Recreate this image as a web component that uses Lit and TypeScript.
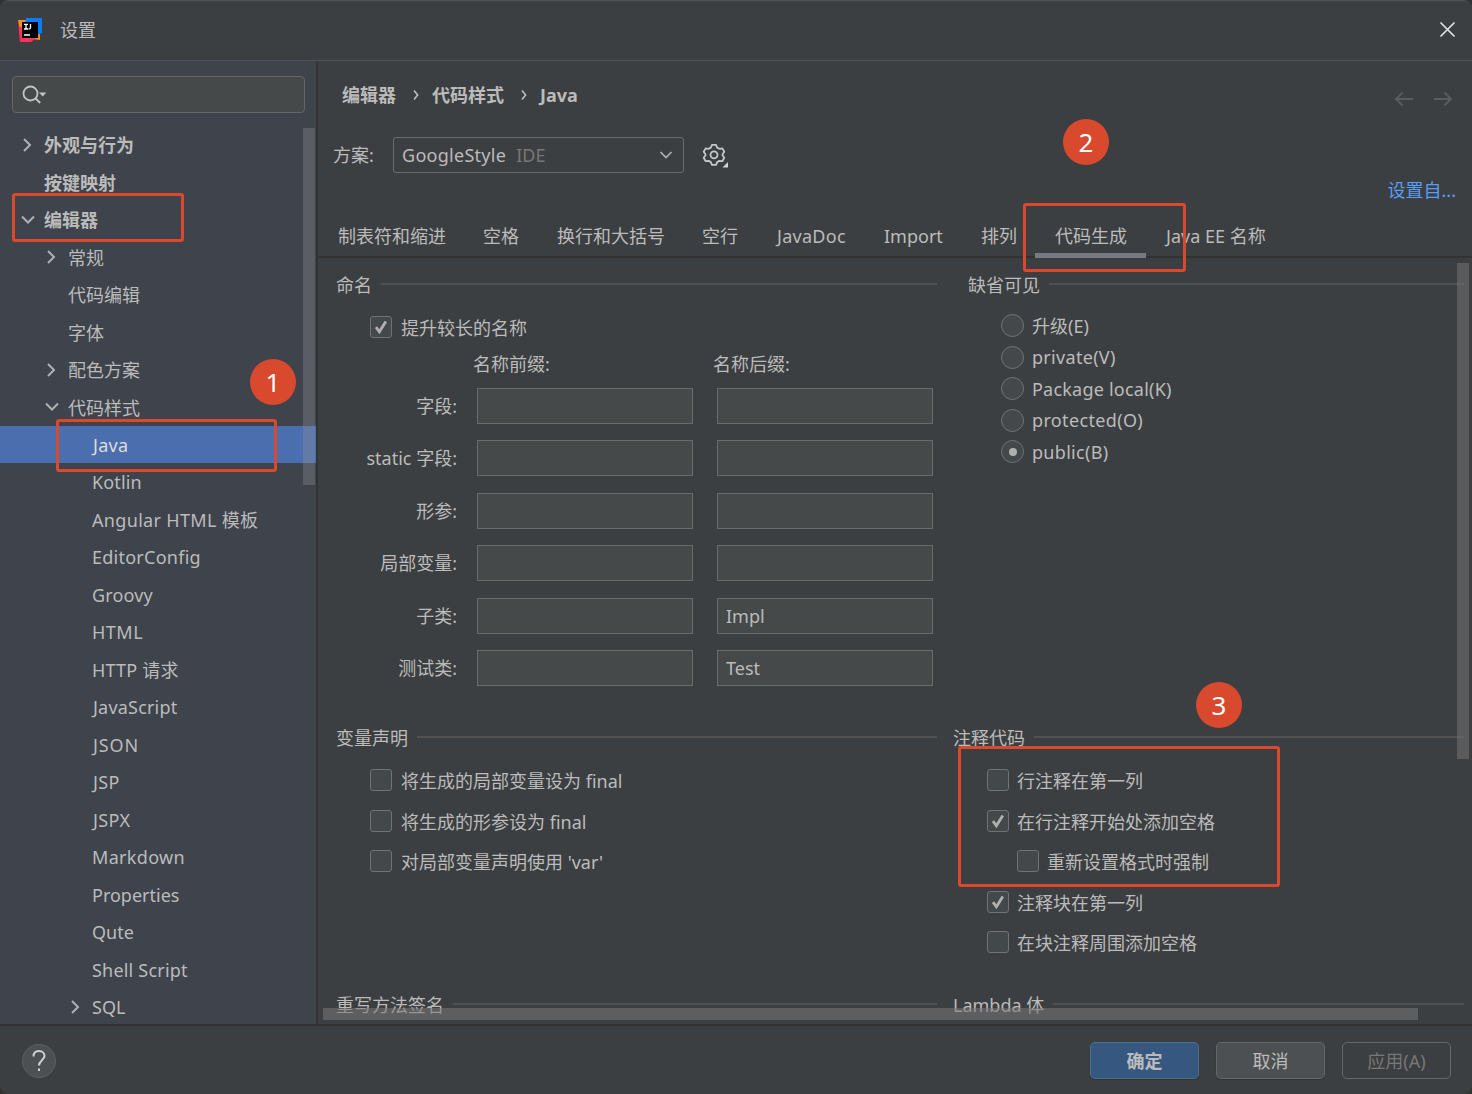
import { LitElement, html, css, svg, nothing } from "lit";
import { customElement, state } from "lit/decorators.js";
import { classMap } from "lit/directives/class-map.js";
import { styleMap } from "lit/directives/style-map.js";

type Node = { label: string; level: number; arrow?: "open" | "closed"; bold?: boolean };

const TREE: Node[] = [
  { label: "外观与行为", level: 0, arrow: "closed", bold: true },
  { label: "按键映射", level: 0, bold: true },
  { label: "编辑器", level: 0, arrow: "open", bold: true },
  { label: "常规", level: 1, arrow: "closed" },
  { label: "代码编辑", level: 1 },
  { label: "字体", level: 1 },
  { label: "配色方案", level: 1, arrow: "closed" },
  { label: "代码样式", level: 1, arrow: "open" },
  { label: "Java", level: 2 },
  { label: "Kotlin", level: 2 },
  { label: "Angular HTML 模板", level: 2 },
  { label: "EditorConfig", level: 2 },
  { label: "Groovy", level: 2 },
  { label: "HTML", level: 2 },
  { label: "HTTP 请求", level: 2 },
  { label: "JavaScript", level: 2 },
  { label: "JSON", level: 2 },
  { label: "JSP", level: 2 },
  { label: "JSPX", level: 2 },
  { label: "Markdown", level: 2 },
  { label: "Properties", level: 2 },
  { label: "Qute", level: 2 },
  { label: "Shell Script", level: 2 },
  { label: "SQL", level: 2, arrow: "closed" },
];

// Tracking per label, in pixels
const TRACKING: Record<string, number> = {
  "Angular HTML 模板": 0.33,
  EditorConfig: 0.25,
  Kotlin: 0.15,
  Groovy: 0.15,
  HTML: 0.5,
  "HTTP 请求": 0.2,
  Java: 0.25,
  JavaScript: 0.2,
  JSON: 0.9,
  JSP: 0.3,
  JSPX: 0.4,
  Markdown: 0.33,
  "Shell Script": 0.2,
  JavaDoc: 0.28,
  "Package local(K)": 0.22,
  "private(V)": 0.3,
  "protected(O)": 0.35,
  "public(B)": 0.3,
};

const label = (text: string) =>
  html`<span class=${classMap({ label: true, jay: text.startsWith("J") })} style=${styleMap({ letterSpacing: (TRACKING[text] ?? 0) + "px" })}>${text}</span>`;

const TABS: [string, number][] = [
  ["制表符和缩进", 145],
  ["空格", 74],
  ["换行和大括号", 145],
  ["空行", 74],
  ["JavaDoc", 108],
  ["Import", 97],
  ["排列", 73],
  ["代码生成", 111],
  ["Java EE 名称", 140],
];

const NAMES: [string, string, string][] = [
  ["字段:", "", ""],
  ["static 字段:", "", ""],
  ["形参:", "", ""],
  ["局部变量:", "", ""],
  ["子类:", "", "Impl"],
  ["测试类:", "", "Test"],
];

const VISIBILITY = ["升级(E)", "private(V)", "Package local(K)", "protected(O)", "public(B)"];

const chevron = (open: boolean) => html`<svg class="chev" width="16" height="16" viewBox="0 0 16 16">
  ${open ? svg`<path d="M3 4.500l6 6 6-6" />` : svg`<path d="M5 2l6 6-6 6" />`}
</svg>`;

const checkbox = (text: string, on = false, indent = false) => html`<div class=${classMap({ check: true, indent })}>
  <span class="box">${on
    ? html`<svg width="20" height="20" viewBox="0 0 20 20"><path d="M5 10.200l3.400 4.600 6.400-10.200" /></svg>`
    : nothing}</span>
  <span class="txt">${text}</span>
</div>`;

const heading = (text: string) => html`<div class="heading"><span>${text}</span><i></i></div>`;

@customElement("app-root")
export class AppRoot extends LitElement {
  @state() private selected = "Java";
  @state() private tab = "代码生成";
  @state() private visibility = "public(B)";

  static styles = css`
    :host {
      display: block;
      width: 1472px;
      height: 1094px;
      background: #313335;
      color: #bbbbbb;
      font: 18px/24px "Noto Sans", "Noto Sans CJK SC", sans-serif;
      overflow: hidden;
    }
    * { box-sizing: border-box; }
    svg { display: block; fill: none; flex: none; }
    .label.jay { padding-left: 1px; }
    .window {
      position: relative;
      display: grid;
      grid-template-rows: 59px 964px 70px;
      height: 1094px;
      border-top: 1px solid #505355;
      border-radius: 9px;
      overflow: hidden;
      background: #3c3f41;
    }
    .title {
      display: flex;
      align-items: center;
      padding: 0 16px 2px 17px;
      height: 60px;
      border-bottom: 1px solid #515355;
      white-space: nowrap;
    }
    .title span { flex: 1; margin-left: 17px; }
    .body { display: grid; grid-template-columns: 318px 1fr; min-height: 0; padding-top: 1px; }
    .side {
      background: #3e434c;
      border-right: 2px solid #323334;
      display: flex;
      flex-direction: column;
      min-height: 0;
      overflow: hidden;
    }
    .search {
      flex: none;
      width: 293px;
      height: 37px;
      margin: 15px 0 0 12px;
      padding: 8px 9px;
      border: 1px solid #646668;
      border-radius: 4px;
      background: #45494a;
    }
    .search svg { margin-top: -1px; }
    .treewrap { flex: 1; min-height: 0; margin-top: 13px; display: flex; position: relative; }
    .tree { flex: 1; min-width: 0; }
    .node { display: flex; align-items: center; height: 37.47px; padding-left: 19px; white-space: nowrap; }
    .node.l1 { padding-left: 43px; }
    .node.l2 { padding-left: 67px; }
    .node .slot { width: 25px; flex: none; }
    .node .label { padding-top: 1px; }
    .node.bold { font-weight: 700; }
    .node.sel { background: #4b6eaf; color: #dddddd; }
    .chev path { stroke: #afb1b3; stroke-width: 2; }
    .sidebar-thumb {
      position: absolute; right: 1px; top: 2px; width: 12px; height: 357px;
      background: rgba(150, 150, 150, 0.32);
    }
    .main { min-width: 0; min-height: 0; display: flex; flex-direction: column; }
    .crumbs { display: flex; align-items: center; height: 70px; padding: 0 19px 2px 24px; font-weight: 700; }
    .crumbs .sep { width: 36px; padding-left: 4px; display: flex; justify-content: center; }
    .crumbs .sep path { stroke: #bbbbbb; stroke-width: 1.6; }
    .crumbs .grow { flex: 1; }
    .crumbs .nav { display: flex; gap: 19px; padding-top: 8px; }
    .nav path { stroke: #5a5d5f; stroke-width: 1.8; }
    .scheme { display: flex; align-items: center; height: 47px; padding-left: 15px; }
    .scheme .lbl { width: 60px; }
    .combo {
      display: flex; align-items: center; width: 291px; height: 36px; padding: 0 10px 0 8px;
      border: 1px solid #6b6b6b; border-radius: 3px; margin-right: 18px;
    }
    .combo span { letter-spacing: 0.28px; }
    .combo em { font-style: normal; color: #777777; margin-left: 10px; flex: 1; }
    .combo path { stroke: #afb1b3; stroke-width: 1.7; }
    .linkrow { height: 24px; padding-right: 16px; text-align: right; color: #589df6; }
    .tabs {
      display: flex; height: 56px; padding-left: 1px; flex: none;
      border-bottom: 2px solid #323232;
    }
    .tab { height: 56px; padding: 22px 0 0 19px; white-space: nowrap; }
    .tab.on { border-bottom: 5px solid #747a80; padding-left: 20px; }
    .content { position: relative; flex: 1; min-height: 0; overflow: hidden; }
    .cols { display: grid; grid-template-columns: 601px 513px; column-gap: 14px; padding: 14px 0 0 18px; }
    .cols > .r { padding-left: 2px; }
    .top { height: 453px; }
    .mid { height: 267px; }
    .cols > .r.top { padding-left: 17px; }
    .heading { display: flex; align-items: center; gap: 9px; height: 26px; white-space: nowrap; }
    .heading i { flex: 1; height: 2px; background: #515151; margin-bottom: 2px; }
    .check { display: flex; align-items: center; gap: 9px; height: 40.5px; padding-left: 34px; white-space: nowrap; }
    .r .check { gap: 8px; }
    .check.indent { padding-left: 64px; }
    .check .txt { padding-top: 2px; }
    .box { width: 22px; height: 22px; border: 1px solid #707274; border-radius: 3px; background: #43494a; flex: none; }
    .box path { stroke: #b0b0b0; stroke-width: 2.8; }
    .checks { padding-top: 9px; }
    .heads { display: grid; grid-template-columns: 240px 240px; padding-left: 137px; height: 36px; margin-top: -2px; align-items: center; }
    .names { display: grid; grid-template-columns: 122px 216px 216px; column-gap: 24px; row-gap: 16.5px; padding-top: 6px; }
    .names .lbl { text-align: right; line-height: 37px; height: 36px; white-space: nowrap; margin-right: 1px; }
    .field { height: 36px; border: 1px solid #6b6b6b; background: #45494a; padding: 0 8px; line-height: 34px; }
    .names .field { margin-left: -5px; width: 216px; }
    .radios { padding: 12px 0 0 33px; }
    .radio { display: flex; align-items: center; height: 31.5px; gap: 8px; white-space: nowrap; }
    .dot { width: 23px; height: 23px; border: 1px solid #727475; border-radius: 50%; background: #43494a; display: grid; place-items: center; }
    .dot i { width: 8px; height: 8px; border-radius: 50%; background: #b0b0b0; }
    .vthumb { position: absolute; right: 3px; top: 5px; width: 12px; height: 496px; background: rgba(120, 120, 122, 0.5); }
    .hthumb { position: absolute; left: 5px; bottom: 4px; width: 1095px; height: 12px; background: rgba(120, 120, 122, 0.55); }
    .foot {
      display: flex; align-items: center; gap: 17px; padding: 1px 21px 0 22px;
      border-top: 2px solid #323232;
    }
    .help { width: 34px; height: 34px; border-radius: 50%; border: 1px solid #5e6060; background: #4c5052;
      display: grid; place-items: center; margin-right: auto; }
    .help path { stroke: #d0d0d0; stroke-width: 2; }
    .btn { width: 109px; height: 37px; border: 1px solid #656768; border-radius: 5px; background: #4c5052;
      text-align: center; line-height: 37px; box-shadow: 0 1px 1px rgba(0, 0, 0, 0.2); }
    .btn.primary { background: #365880; border-color: #4c708c; font-weight: 700; }
    .btn.off { background: none; color: #777777; box-shadow: none; }
    .mark { position: absolute; border: 3px solid #d9492d; border-radius: 3px; }
    .m1 { left: 12px; top: 192px; width: 172px; height: 49px; }
    .m2 { left: 56px; top: 418px; width: 221px; height: 53px; }
    .m3 { left: 1023px; top: 202px; width: 163px; height: 69px; }
    .m4 { left: 958px; top: 745px; width: 322px; height: 141px; }
    .num { position: absolute; width: 46px; height: 46px; border-radius: 50%; background: #d9492d; color: #fff;
      font-size: 26px; line-height: 46px; text-align: center; }
    .n1 { left: 250px; top: 358px; }
    .n2 { left: 1063px; top: 118px; }
    .n3 { left: 1196px; top: 681px; }
  `;

  private renderTree() {
    return TREE.map(
      (n) => html`<div
        class=${classMap({ node: true, l1: n.level === 1, l2: n.level === 2, bold: !!n.bold, sel: n.label === this.selected })}
        @click=${() => (this.selected = n.label)}
      >
        <span class="slot">${n.arrow ? chevron(n.arrow === "open") : nothing}</span>${label(n.label)}
      </div>`
    );
  }

  render() {
    const sep = html`<span class="sep"><svg width="8" height="12" viewBox="0 0 8 12"><path d="M2 1.5L5.6 6 2 10.5" /></svg></span>`;
    return html`<div class="window">
      <div class="title">
        <svg width="26" height="26" viewBox="0 0 26 26">
          <path fill="#fc8a1c" d="M1 3h8l2 19H4z" />
          <path fill="#fc8a1c" d="M12 12l11 3v8l-8-1z" />
          <path fill="#fe315d" d="M1.500 9l12.500 6 5 6-5 4H3z" />
          <path fill="#087cfa" d="M9 1h16v15l-4 2L8 6z" />
          <path fill="#000" d="M5 5h16v16H5z" />
          <path stroke="#fff" stroke-width="1.300" d="M7 7.400h4M9 7.400v4.800M7 12h4M13.500 7v3.600q0 1.600-2 1.300M7 18h6" />
        </svg>
        <span>设置</span>
        <svg width="17" height="17" viewBox="0 0 17 17"><path stroke="#e0e0e0" stroke-width="1.7" d="M1.500 1.500l14 14M15.500 1.500l-14 14" /></svg>
      </div>
      <div class="body">
        <div class="side">
          <div class="search">
            <svg width="26" height="22" viewBox="0 0 26 22">
              <circle cx="8.500" cy="9.500" r="7" stroke="#c0c2c4" stroke-width="1.800" />
              <path stroke="#c0c2c4" stroke-width="2" d="M13.200 14l5 5" />
              <path fill="#c0c2c4" d="M17 8.500h7.400l-3.700 4z" />
            </svg>
          </div>
          <div class="treewrap">
            <div class="tree">${this.renderTree()}</div>
            <div class="sidebar-thumb"></div>
          </div>
        </div>
        <div class="main">
          <div class="crumbs">
            <span>编辑器</span>${sep}<span>代码样式</span>${sep}<span>Java</span>
            <span class="grow"></span>
            <span class="nav">
              <svg width="20" height="16" viewBox="0 0 20 16"><path d="M19 8H2M8.500 1.500L2 8l6.500 6.500" /></svg>
              <svg width="20" height="16" viewBox="0 0 20 16"><path d="M1 8h17M11.500 1.500L18 8l-6.500 6.500" /></svg>
            </span>
          </div>
          <div class="scheme">
            <span class="lbl">方案:</span>
            <div class="combo">
              <span>GoogleStyle</span><em>IDE</em>
              <svg width="14" height="10" viewBox="0 0 14 10"><path d="M1.500 2l5.500 5.500L12.500 2" /></svg>
            </div>
            <svg width="28" height="26" viewBox="0 0 28 26">
              <path stroke="#c4c6c8" stroke-width="1.800" stroke-linejoin="round"
                d="M10 2.800H14L15.200 5.600L17.300 6.800L20.300 6.400L22.300 9.800L20.500 12.300V13.300L22.300 15.800L20.300 19.200L17.300 18.900L15.200 20.100L14 22.800H10L8.800 20.100L6.700 18.900L3.700 19.200L1.700 15.800L3.500 13.300V12.300L1.700 9.800L3.700 6.400L6.700 6.800L8.800 5.600Z" />
              <circle cx="12" cy="12.800" r="3.500" stroke="#c4c6c8" stroke-width="1.800" />
              <path fill="#d0d2d4" d="M26 20v5.500h-5.500z" />
            </svg>
          </div>
          <div class="linkrow">设置自...</div>
          <div class="tabs">
            ${TABS.map(
              ([text, w]) => html`<div
                class=${classMap({ tab: true, on: text === this.tab })}
                style=${styleMap({ width: w + "px" })}
                @click=${() => (this.tab = text)}
              >${label(text)}</div>`
            )}
          </div>
          <div class="content">
            <div class="cols">
              <div class="l top">
                ${heading("命名")}
                <div class="checks">${checkbox("提升较长的名称", true)}</div>
                <div class="heads"><span>名称前缀:</span><span>名称后缀:</span></div>
                <div class="names">
                  ${NAMES.map(
                    ([l, a, b]) => html`<span class="lbl">${l}</span><div class="field">${a}</div><div class="field">${b}</div>`
                  )}
                </div>
              </div>
              <div class="r top">
                ${heading("缺省可见")}
                <div class="radios">
                  ${VISIBILITY.map(
                    (v) => html`<div class="radio" @click=${() => (this.visibility = v)}>
                      <span class="dot">${v === this.visibility ? html`<i></i>` : nothing}</span>${label(v)}
                    </div>`
                  )}
                </div>
              </div>
              <div class="l mid">
                ${heading("变量声明")}
                <div class="checks">
                  ${checkbox("将生成的局部变量设为 final")} ${checkbox("将生成的形参设为 final")}
                  ${checkbox("对局部变量声明使用 'var'")}
                </div>
              </div>
              <div class="r mid">
                ${heading("注释代码")}
                <div class="checks">
                  ${checkbox("行注释在第一列")} ${checkbox("在行注释开始处添加空格", true)}
                  ${checkbox("重新设置格式时强制", false, true)} ${checkbox("注释块在第一列", true)}
                  ${checkbox("在块注释周围添加空格")}
                </div>
              </div>
              <div class="l">${heading("重写方法签名")}</div>
              <div class="r">${heading("Lambda 体")}</div>
            </div>
            <div class="vthumb"></div>
            <div class="hthumb"></div>
          </div>
        </div>
      </div>
      <div class="foot">
        <span class="help">
          <svg width="16" height="24" viewBox="0 0 16 24"><path d="M2.500 7.500C2.500 4 4.800 2 8 2s5.500 2 5.500 5c0 4-5.500 4.500-5.500 9.500M8 19.500v2.500" /></svg>
        </span>
        <div class="btn primary">确定</div>
        <div class="btn">取消</div>
        <div class="btn off">应用(A)</div>
      </div>
      <div class="mark m1"></div>
      <div class="mark m2"></div>
      <div class="mark m3"></div>
      <div class="mark m4"></div>
      <div class="num n1">1</div>
      <div class="num n2">2</div>
      <div class="num n3">3</div>
    </div>`;
  }
}
